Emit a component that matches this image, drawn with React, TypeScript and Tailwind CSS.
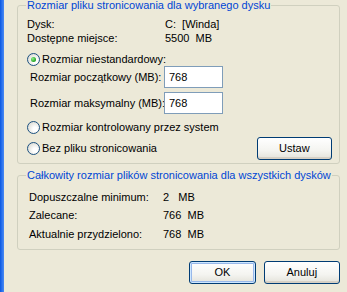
import React from "react";

function Radio({ checked }: { checked?: boolean }) {
  return (
    <span className="relative inline-flex h-[13px] w-[13px] shrink-0 items-center justify-center rounded-full border border-[#1C5180] bg-[radial-gradient(circle_at_65%_65%,#ffffff_20%,#e2e2dc_70%,#d0d0c8_100%)]">
      {checked && (
        <span className="h-[5px] w-[5px] rounded-full bg-[radial-gradient(circle_at_35%_35%,#8ef08a,#21a121_70%)]" />
      )}
    </span>
  );
}

function Btn({ label, def, w }: { label: string; def?: boolean; w: string }) {
  return (
    <button
      className={
        "flex h-[23px] items-center justify-center rounded-[3px] border border-[#003C74] bg-[linear-gradient(#ffffff,#f4f4f0_60%,#e3e2da)] text-[11px] text-black " +
        w +
        (def ? " shadow-[inset_0_0_0_1px_#cee7ff,inset_0_0_0_2px_#98b8ea]" : " shadow-[inset_0_-2px_0_#d6d0c5]")
      }
    >
      {label}
    </button>
  );
}

function Input({ value }: { value: string }) {
  return (
    <div className="flex h-[22px] w-[59px] items-center border border-[#7F9DB9] bg-white pl-[4px] text-[11px] text-black">
      {value}
    </div>
  );
}

export default function App() {
  return (
    <div
      className="flex h-[292px] w-[347px] overflow-hidden whitespace-nowrap text-[11px] leading-[13px] text-black"
      style={{ fontFamily: '"Liberation Sans", Arial, sans-serif' }}
    >
      <div className="w-[4px] shrink-0 bg-[linear-gradient(90deg,#0a56e0,#2a72ee_50%,#4a8af2)]" />
      <div className="flex flex-1 flex-col bg-[#ECE9D8] pl-[13px] pr-[8px]">
        <fieldset className="mt-[-1px] h-[165px] rounded-[3px] border border-[#D0D0BF] pl-[9px] pr-[7px]">
          <legend className="ml-[-1px] px-[1px] text-[#0046D5]">
            Rozmiar pliku stronicowania dla wybranego dysku
          </legend>
          <div className="mt-[6px] flex flex-col">
            <div className="flex h-[13px]">
              <span className="w-[138px]">Dysk:</span>
              <span className="whitespace-pre">C:  [Winda]</span>
            </div>
            <div className="mt-[1px] flex h-[13px]">
              <span className="w-[138px]">Dostępne miejsce:</span>
              <span className="whitespace-pre">5500  MB</span>
            </div>
            <div className="mt-[8px] flex h-[13px] items-center gap-[2px]">
              <Radio checked />
              <span>Rozmiar niestandardowy:</span>
            </div>
            <div className="mt-[0px] flex items-center">
              <span className="w-[137px] pl-[3px]">Rozmiar początkowy (MB):</span>
              <Input value="768" />
            </div>
            <div className="mt-[4px] flex items-center">
              <span className="w-[137px] pl-[3px]">Rozmiar maksymalny (MB):</span>
              <Input value="768" />
            </div>
            <div className="mt-[7px] flex h-[13px] items-center gap-[2px]">
              <Radio />
              <span>Rozmiar kontrolowany przez system</span>
            </div>
            <div className="mt-[3px] flex items-center justify-between">
              <div className="flex h-[13px] items-center gap-[2px]">
                <Radio />
                <span>Bez pliku stronicowania</span>
              </div>
              <Btn label="Ustaw" w="w-[75px]" />
            </div>
          </div>
        </fieldset>
        <fieldset className="mt-[5px] h-[81px] rounded-[3px] border border-[#D0D0BF] pl-[11px] pr-[7px]">
          <legend className="ml-[-3px] px-[1px] text-[#0046D5]">
            Całkowity rozmiar plików stronicowania dla wszystkich dysków
          </legend>
          <div className="mt-[9px] flex flex-col">
            <div className="flex h-[13px]">
              <span className="w-[134px]">Dopuszczalne minimum:</span>
              <span className="whitespace-pre">2   MB</span>
            </div>
            <div className="mt-[5px] flex h-[13px]">
              <span className="w-[134px]">Zalecane:</span>
              <span className="whitespace-pre">766  MB</span>
            </div>
            <div className="mt-[6px] flex h-[13px]">
              <span className="w-[134px]">Aktualnie przydzielono:</span>
              <span className="whitespace-pre">768  MB</span>
            </div>
          </div>
        </fieldset>
        <div className="mt-[11px] flex justify-end gap-[8px]">
          <Btn label="OK" def w="w-[67px]" />
          <Btn label="Anuluj" w="w-[76px]" />
        </div>
      </div>
      <div className="w-[6px] shrink-0 bg-[linear-gradient(90deg,#0831d9,#0026c8_50%,#001ea0)]" />
    </div>
  );
}
